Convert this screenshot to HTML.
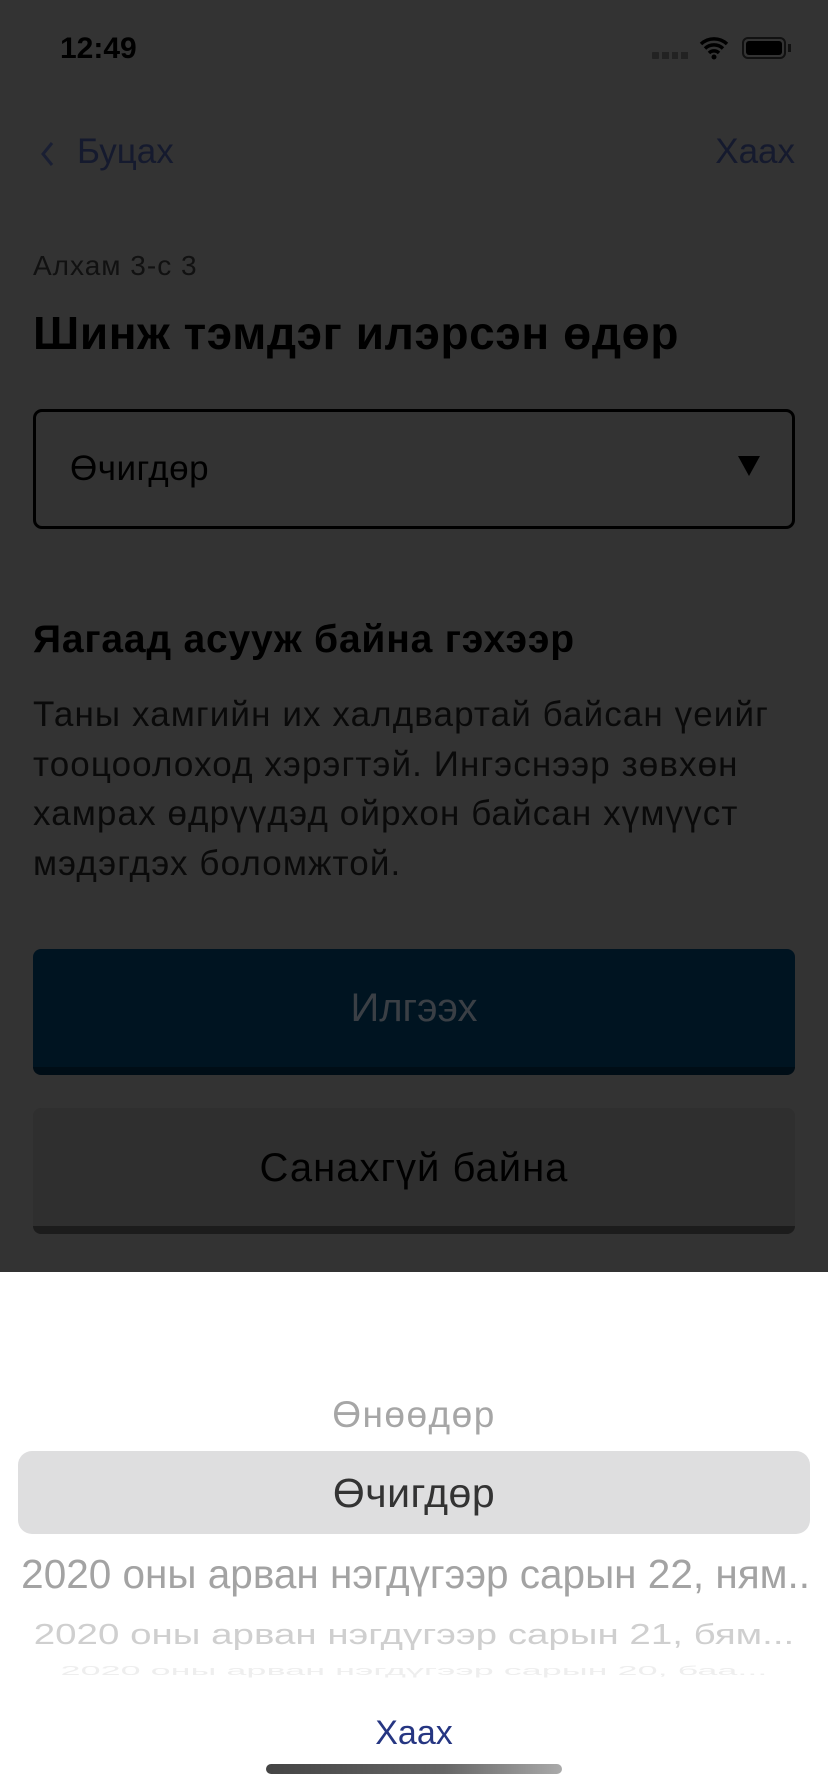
<!DOCTYPE html>
<html><head><meta charset="utf-8"><style>
*{margin:0;padding:0;box-sizing:border-box}
body{width:828px;height:1792px;background:#333;position:relative;overflow:hidden;font-family:"Liberation Sans",sans-serif;color:#000}
.a{position:absolute;white-space:nowrap}
</style></head><body>
<div class="a" style="left:60px;top:32px;font-size:30px;font-weight:bold;color:#000">12:49</div>
<div class="a" style="left:652px;top:52px;width:36px;height:7px;display:flex;gap:3px"><i style="flex:1;background:#222;border-radius:1px"></i><i style="flex:1;background:#222"></i><i style="flex:1;background:#222"></i><i style="flex:1;background:#222"></i></div>
<svg class="a" style="left:699px;top:36px" width="30" height="24" viewBox="0 0 30 24"><path d="M2 8a19 19 0 0 1 26 0M6 12.5a13 13 0 0 1 18 0M10 17a7 7 0 0 1 10 0" stroke="#000" stroke-width="3.5" fill="none"/><circle cx="15" cy="21" r="2.5"/></svg>
<div class="a" style="left:742px;top:37px;width:44px;height:22px;border:2px solid #111;border-radius:6px;padding:2px"><div style="background:#000;height:100%;border-radius:3px"></div></div>
<div class="a" style="left:788px;top:44px;width:3px;height:8px;background:#111"></div>
<svg class="a" style="left:38px;top:140px" width="18" height="28" viewBox="0 0 18 28"><path d="M14 3L5 14l9 11" stroke="#1a1f33" stroke-width="3" fill="none"/></svg>
<div class="a" style="left:77px;top:132px;font-size:35px;color:#151a2e">Буцах</div>
<div class="a" style="right:33px;top:132px;font-size:35px;color:#151a2e">Хаах</div>
<div class="a" style="left:33px;top:250px;font-size:28px;letter-spacing:1px;color:#111">Алхам 3-с 3</div>
<div class="a" style="left:33px;top:306px;font-size:46px;font-weight:bold;letter-spacing:0.6px">Шинж тэмдэг илэрсэн өдөр</div>
<div class="a" style="left:33px;top:409px;width:762px;height:120px;border:3px solid #000;border-radius:9px"></div>
<div class="a" style="left:70px;top:449px;font-size:35px;letter-spacing:0.5px">Өчигдөр</div>
<div class="a" style="left:738px;top:456px;width:0;height:0;border-left:11px solid transparent;border-right:11px solid transparent;border-top:20px solid #000"></div>
<div class="a" style="left:33px;top:618px;font-size:39px;font-weight:bold;letter-spacing:0.8px">Яагаад асууж байна гэхээр</div>
<div class="a" style="left:33px;top:690px;font-size:35px;letter-spacing:1.1px;line-height:49.5px;color:#0a0a0a">Таны хамгийн их халдвартай байсан үеийг<br>тооцоолоход хэрэгтэй. Ингэснээр зөвхөн<br>хамрах өдрүүдэд ойрхон байсан хүмүүст<br>мэдэгдэх боломжтой.</div>
<div class="a" style="left:33px;top:949px;width:762px;height:126px;background:#001421;border-radius:8px;border-bottom:8px solid #000d16"></div>
<div class="a" style="left:0;width:828px;top:986px;text-align:center;font-size:40px;color:#3a3f45">Илгээх</div>
<div class="a" style="left:33px;top:1108px;width:762px;height:126px;background:#2f2f2f;border-radius:8px;border-bottom:8px solid #1c1c1c"></div>
<div class="a" style="left:0;width:828px;top:1146px;text-align:center;font-size:40px;letter-spacing:1px;color:#000">Санахгүй байна</div>
<div class="a" style="left:0;top:1272px;width:828px;height:520px;background:#fff"></div>
<div class="a" style="left:0;width:828px;top:1394px;text-align:center;font-size:37px;letter-spacing:1.5px;color:#a6a6a6">Өнөөдөр</div>
<div class="a" style="left:18px;top:1451px;width:792px;height:83px;background:#dededf;border-radius:14px"></div>
<div class="a" style="left:0;width:828px;top:1470px;text-align:center;font-size:41px;letter-spacing:0.5px;color:#333">Өчигдөр</div>
<div class="a" style="left:18px;width:792px;top:1551px;font-size:40.5px;color:#a3a3a3;overflow:hidden;direction:rtl;text-align:right"><span style="direction:ltr;unicode-bidi:embed">2020 оны арван нэгдүгээр сарын 22, ням..</span></div>
<div class="a" style="left:18px;width:792px;top:1613px;text-align:center;font-size:38.5px;color:#cfcfcf;transform:scaleY(.75);overflow:hidden">2020 оны арван нэгдүгээр сарын 21, бям...</div>
<div class="a" style="left:18px;width:792px;top:1650px;text-align:center;font-size:36px;color:#eee;transform:scaleY(.35);overflow:hidden">2020 оны арван нэгдүгээр сарын 20, баа...</div>
<div class="a" style="left:0;width:828px;top:1714px;text-align:center;font-size:34px;color:#263682">Хаах</div>
<div class="a" style="left:266px;top:1764px;width:296px;height:10px;border-radius:5px;background:linear-gradient(90deg,#444,#666 60%,#aaa)"></div>
</body></html>
